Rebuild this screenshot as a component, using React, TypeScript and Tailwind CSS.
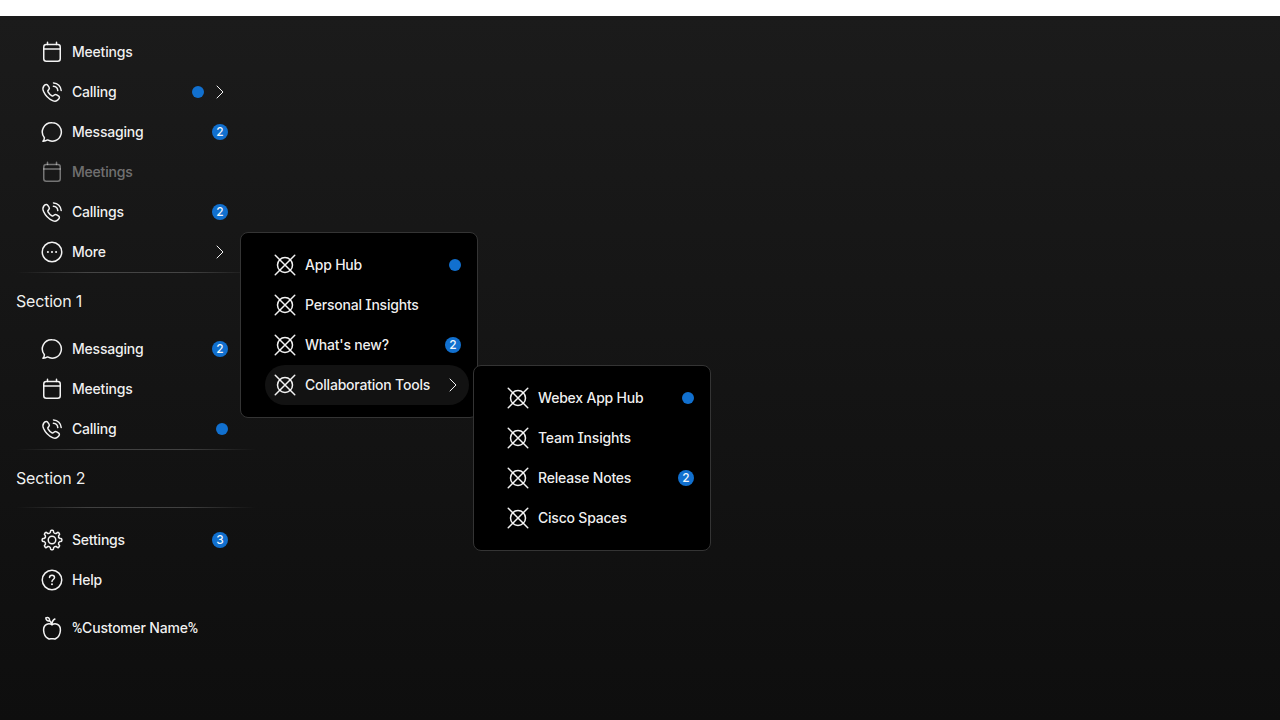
import type { ReactNode } from "react";

type IconName = "calendar" | "calling" | "chat" | "more" | "settings" | "help" | "apple" | "placeholder";

const gearPath = (() => {
  const at = (angle: number, radius: number) =>
    `${(12 + radius * Math.cos(angle)).toFixed(2)} ${(12 + radius * Math.sin(angle)).toFixed(2)}`;
  let d = "";
  for (let i = 0; i < 8; i++) {
    const a = (i * Math.PI) / 4 - Math.PI / 2;
    d += `${i === 0 ? "M" : "L"}${at(a - 0.2, 7.9)}L${at(a - 0.16, 9.1)}Q${at(a - 0.14, 9.85)} ${at(a - 0.05, 9.85)}`;
    d += `L${at(a + 0.05, 9.85)}Q${at(a + 0.14, 9.85)} ${at(a + 0.16, 9.1)}L${at(a + 0.2, 7.9)}Q${at(a + Math.PI / 8, 6.5)} ${at(a + Math.PI / 4 - 0.2, 7.9)}`;
  }
  return d + "Z";
})();

const icons: Record<IconName, ReactNode> = {
  calendar: (
    <>
      <rect x="3.75" y="4.5" width="16.5" height="16.75" rx="2.5" />
      <path d="M3.75 9h16.5M7.5 2.25V4.5M16.5 2.25V4.5" />
    </>
  ),
  calling: (
    <>
      <path d="M3.9 5.9 5 4.9c.8-.7 2-.6 2.6.2L9 7.1c.5.8.4 1.8-.2 2.5l-.7.8c-.4.4-.4.9-.1 1.4.9 1.6 2.3 3 4 4 .5.3 1 .2 1.4-.1l.8-.7c.7-.6 1.7-.7 2.5-.2l2 1.4c.8.6.9 1.8.2 2.6l-.9 1c-1.2 1.4-3.3 1.7-5.4.8-4-1.8-7.2-5-9-9.1-.9-2.2-.9-4.2.3-5.6Z" />
      <path d="M13.5 2.9a8 8 0 0 1 7.7 7.6M13.4 6.3a4.7 4.7 0 0 1 4.4 4.3" />
    </>
  ),
  chat: <path d="M12.2 2.75a9.2 9.2 0 1 1-4.6 17.2c-1.3.8-3 1.3-4.7 1.25 1-.9 1.5-2.1 1.5-3.5A9.2 9.2 0 0 1 12.2 2.75Z" />,
  more: (
    <>
      <circle cx="12" cy="12" r="9.75" />
      <g fill="currentColor" stroke="none">
        <circle cx="7.9" cy="12" r="1.05" />
        <circle cx="12" cy="12" r="1.05" />
        <circle cx="16.1" cy="12" r="1.05" />
      </g>
    </>
  ),
  settings: (
    <>
      <path d={gearPath} />
      <circle cx="12" cy="12" r="3.75" />
    </>
  ),
  help: (
    <>
      <circle cx="12" cy="12" r="9.75" />
      <path d="M9.5 9.6c0-1.35 1.05-2.35 2.5-2.35s2.5.95 2.5 2.25c0 1.9-2.5 2.05-2.5 4.05" />
      <circle cx="12" cy="16.3" r="1" fill="currentColor" stroke="none" />
    </>
  ),
  apple: (
    <>
      <path d="M12 8.7C10.5 7.8 8.6 7.5 6.9 8.2c-2.3.9-3.4 3.2-3.3 6 .2 3.6 2 6.9 4.5 8.3.9.5 1.8.5 2.6.3.9-.2 1.7-.2 2.6 0 .8.2 1.7.2 2.6-.3 2.5-1.4 4.3-4.7 4.5-8.3.1-2.8-1-5.1-3.3-6-1.7-.7-3.6-.4-5.1.5Z" />
      <path d="M12 8.7c-.1-2.7.9-4.6 2.9-5.7M11.4 7.4C11 6.2 10.3 5.2 9.3 4.4M9.5 4.8C7.6 5.3 6 4.4 5.8 1.9c2.2-1.1 4.1.2 3.7 2.9Z" />
    </>
  ),
  placeholder: (
    <>
      <circle cx="12" cy="12" r="7.5" />
      <path d="M2.25 2.25 21.75 21.75M21.75 2.25 2.25 21.75" />
    </>
  ),
};

function Icon({ name }: { name: IconName }) {
  return (
    <svg
      viewBox="0 0 24 24"
      className="size-6 shrink-0"
      fill="none"
      stroke="currentColor"
      strokeWidth="1.5"
      strokeLinecap="round"
      strokeLinejoin="round"
    >
      {icons[name]}
    </svg>
  );
}

function Badge({ count }: { count?: number }) {
  if (count === undefined) return <span className="size-3 rounded-full bg-[#1170cf]" />;
  return (
    <span className="flex size-4 items-center justify-center rounded-full bg-[#1170cf] text-xs font-medium leading-4">
      {count}
    </span>
  );
}

interface ItemProps {
  icon: IconName;
  label: ReactNode;
  dot?: boolean;
  count?: number;
  arrow?: boolean;
  disabled?: boolean;
  active?: boolean;
}

function NavItem({ icon, label, dot, count, arrow, disabled, active }: ItemProps) {
  return (
    <li
      className={`flex h-10 w-[204px] items-center gap-2 rounded-full px-2 ${
        disabled ? "text-white/40" : "text-white/95"
      } ${active ? "bg-white/7" : ""}`}
    >
      <Icon name={icon} />
      <span className="flex-1 whitespace-nowrap text-sm font-medium tracking-[-0.21px]">{label}</span>
      {dot && <Badge />}
      {count !== undefined && <Badge count={count} />}
      {arrow && (
        <svg viewBox="0 0 16 16" className="size-4 shrink-0" fill="none" stroke="currentColor" strokeLinecap="round" strokeLinejoin="round">
          <path d="M5 2l6 6-6 6" />
        </svg>
      )}
    </li>
  );
}

function Divider() {
  return (
    <div className="ml-4 h-px w-60 bg-[linear-gradient(to_right,transparent,rgba(255,255,255,0.2)_30%,rgba(255,255,255,0.2)_70%,transparent)]" />
  );
}

function Percent() {
  return <span className="font-['Roboto',sans-serif]">%</span>;
}

function Flyout({ items, children, className }: { items: ItemProps[]; children?: ReactNode; className: string }) {
  return (
    <div className={`absolute h-[186px] w-[238px] rounded-lg border border-[#343434] bg-black py-3 pl-6 ${className}`}>
      <ul>
        {items.map((item, index) => (
          <NavItem key={index} {...item} />
        ))}
      </ul>
      {children}
    </div>
  );
}

export default function App() {
  return (
    <div className="h-[720px] overflow-hidden bg-white pt-4 font-['Inter',sans-serif] [font-feature-settings:'cv08']">
      <div className="relative h-[704px] bg-linear-to-b from-[#1b1b1b] to-[#0e0e0e] pt-4 text-white/95">
        <nav className="w-64">
          <ul className="pl-8">
            <NavItem icon="calendar" label="Meetings" />
            <NavItem icon="calling" label="Calling" dot arrow />
            <NavItem icon="chat" label="Messaging" count={2} />
            <NavItem icon="calendar" label="Meetings" disabled />
            <NavItem icon="calling" label="Callings" count={2} />
            <NavItem icon="more" label="More" arrow />
          </ul>
          <Divider />
          <h2 className="flex h-14 items-center pl-4 text-base tracking-[-0.2px]">Section 1</h2>
          <ul className="pl-8">
            <NavItem icon="chat" label="Messaging" count={2} />
            <NavItem icon="calendar" label="Meetings" />
            <NavItem icon="calling" label="Calling" dot />
          </ul>
          <Divider />
          <h2 className="flex h-[57px] items-center pb-px pl-4 text-base tracking-[-0.2px]">Section 2</h2>
          <Divider />
          <ul className="pl-8 pt-3">
            <NavItem icon="settings" label="Settings" count={3} />
            <NavItem icon="help" label="Help" />
          </ul>
          <ul className="pl-8 pt-2">
            <NavItem
              icon="apple"
              label={
                <>
                  <Percent />
                  Customer Name
                  <Percent />
                </>
              }
            />
          </ul>
        </nav>
        <Flyout
          className="left-60 top-[216px]"
          items={[
            { icon: "placeholder", label: "App Hub", dot: true },
            { icon: "placeholder", label: "Personal Insights" },
            { icon: "placeholder", label: "What's new?", count: 2 },
            { icon: "placeholder", label: "Collaboration Tools", arrow: true, active: true },
          ]}
        >
          <Flyout
            className="left-[232px] top-[132px]"
            items={[
              { icon: "placeholder", label: "Webex App Hub", dot: true },
              { icon: "placeholder", label: "Team Insights" },
              { icon: "placeholder", label: "Release Notes", count: 2 },
              { icon: "placeholder", label: "Cisco Spaces" },
            ]}
          />
        </Flyout>
      </div>
    </div>
  );
}
